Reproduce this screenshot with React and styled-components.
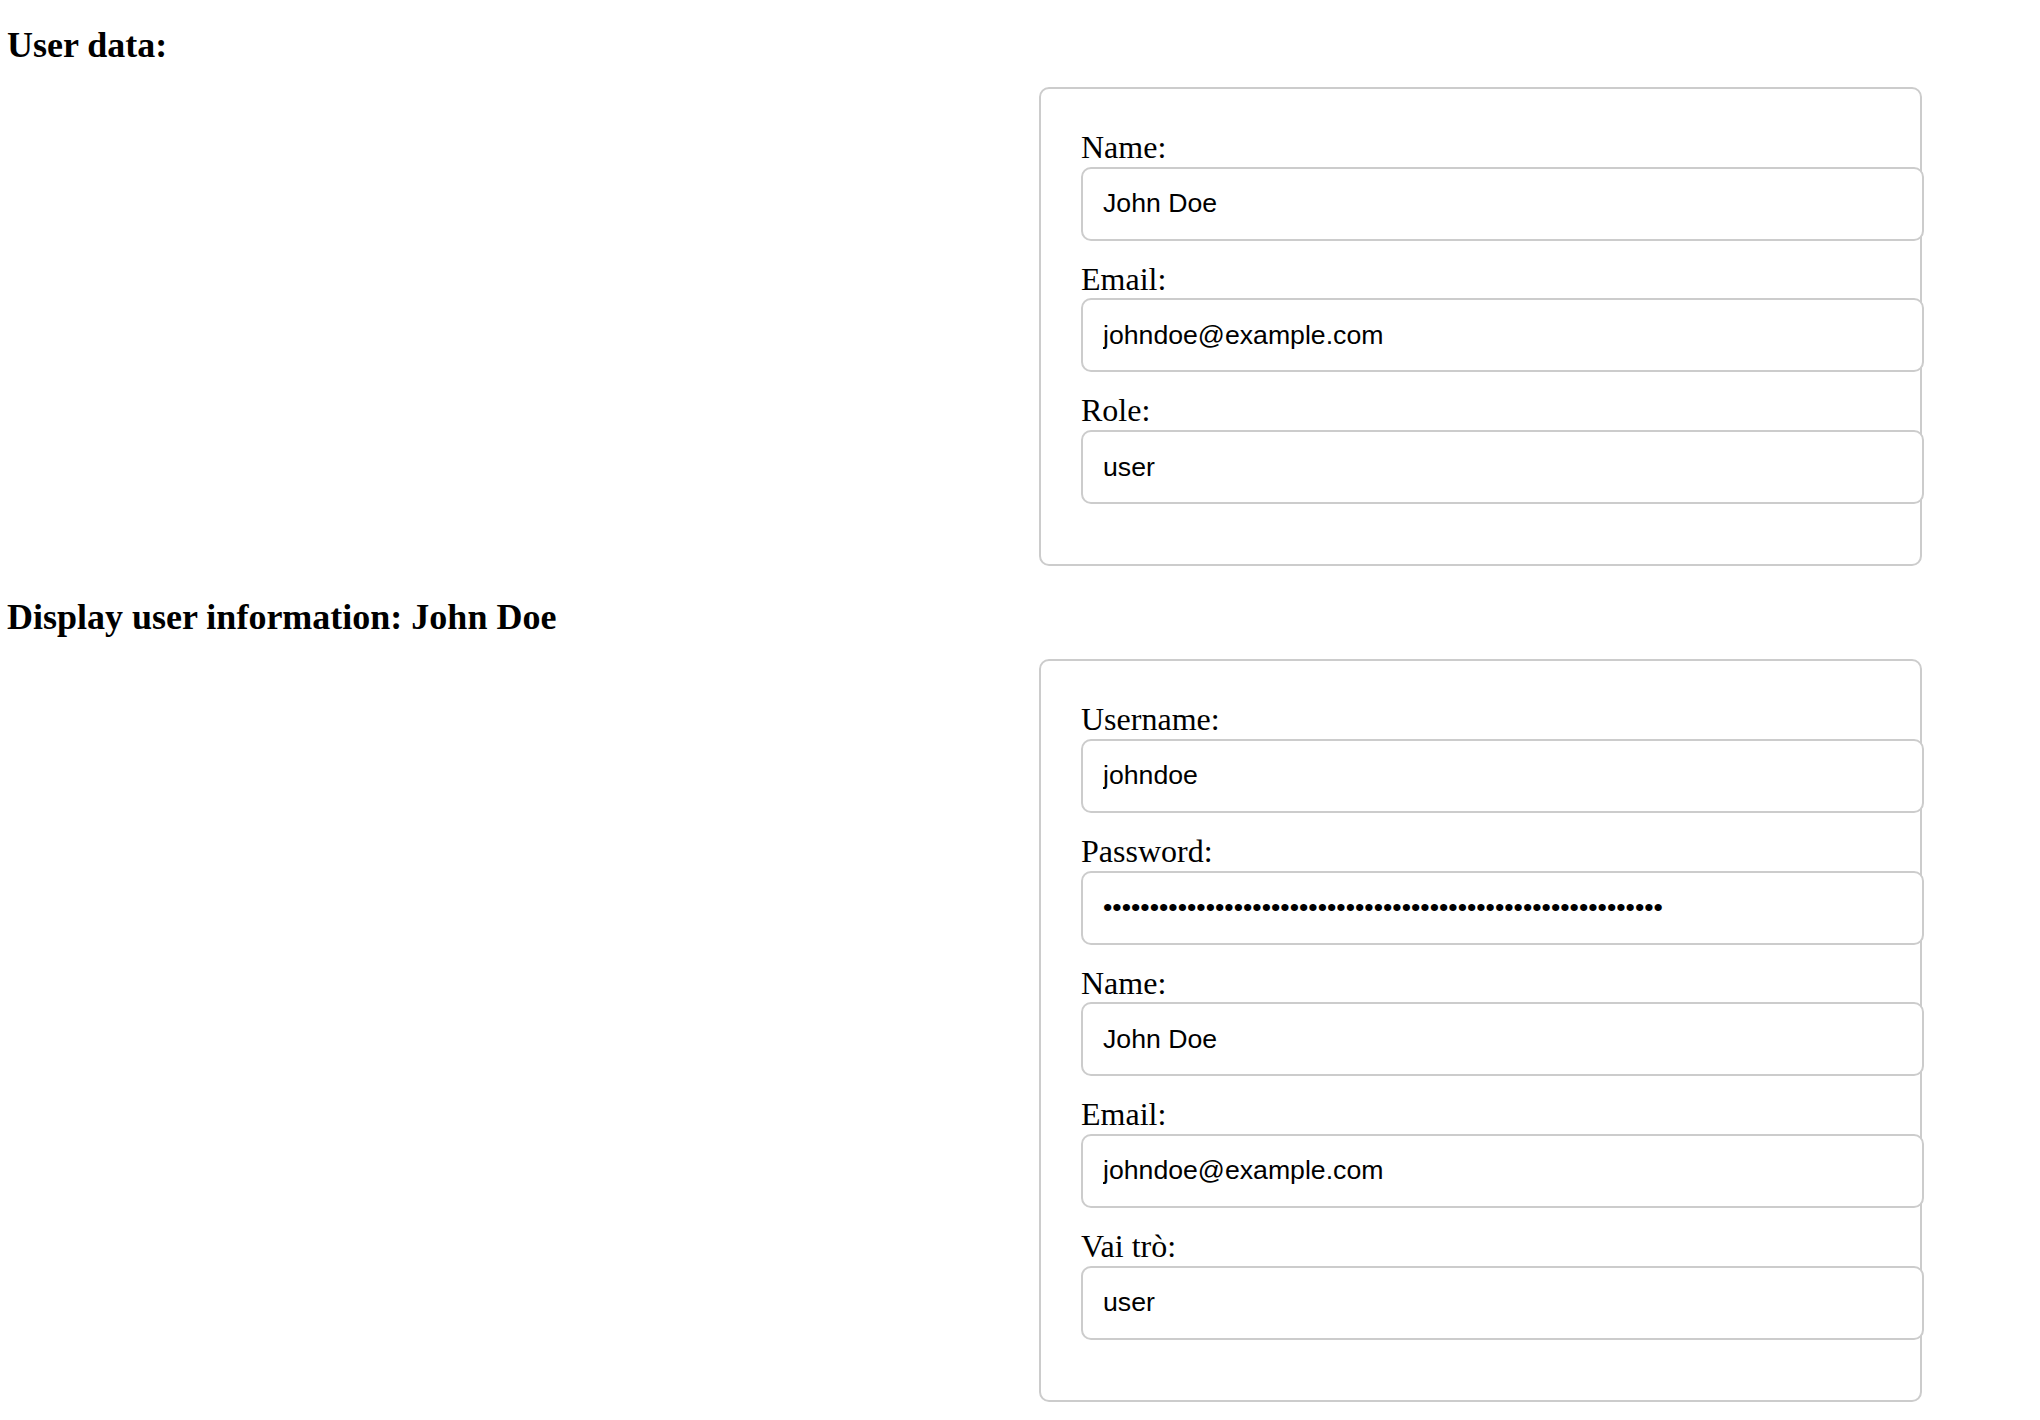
import React from 'react';
import styled, { createGlobalStyle } from 'styled-components';

const GlobalStyle = createGlobalStyle`
  body {
    margin: 0;
    background: #ffffff;
    color: #000000;
    font-family: "Liberation Serif", "Times New Roman", serif;
  }
`;

const Page = styled.div`
  padding: 0 7px;
`;

const Heading = styled.h3`
  margin: ${(p) => (p.$first ? '25px 0 22px' : '31px 0 22px')};
  font-size: 36px;
  line-height: 40px;
  font-weight: 700;
`;

const Card = styled.div`
  width: 799px;
  margin-left: 1032px;
  padding: 40px;
  border: 2px solid #cccccc;
  border-radius: 10px;
`;

const Field = styled.div`
  margin-bottom: 20px;
`;

const Label = styled.label`
  display: block;
  font-size: 32px;
  line-height: 37.7px;
`;

const Input = styled.input`
  display: block;
  width: 100%;
  height: 30px;
  margin: 0;
  padding: 20px;
  border: 2px solid #cccccc;
  border-radius: 10px;
  background: #ffffff;
  color: #000000;
  font-family: "Liberation Sans", Arial, sans-serif;
  font-size: 26.67px;
  outline: none;
`;

const user = {
  username: 'johndoe',
  password: '$2b$10$N9qo8uLOickgx2ZMRZoMyeIjZAgcfl7p92ldGxad68LJZdL17lhWy',
  name: 'John Doe',
  email: 'johndoe@example.com',
  role: 'user',
};

const FormField = ({ label, value, type = 'text' }) => (
  <Field>
    <Label>{label}</Label>
    <Input type={type} value={value} readOnly />
  </Field>
);

const App = () => {
  return (
    <Page>
      <GlobalStyle />
      <Heading $first>User data:</Heading>
      <Card>
        <FormField label="Name:" value={user.name} />
        <FormField label="Email:" value={user.email} />
        <FormField label="Role:" value={user.role} />
      </Card>

      <Heading>Display user information: {user.name}</Heading>
      <Card>
        <FormField label="Username:" value={user.username} />
        <FormField label="Password:" value={user.password} type="password" />
        <FormField label="Name:" value={user.name} />
        <FormField label="Email:" value={user.email} />
        <FormField label="Vai trò:" value={user.role} />
      </Card>
    </Page>
  );
};

export default App;
